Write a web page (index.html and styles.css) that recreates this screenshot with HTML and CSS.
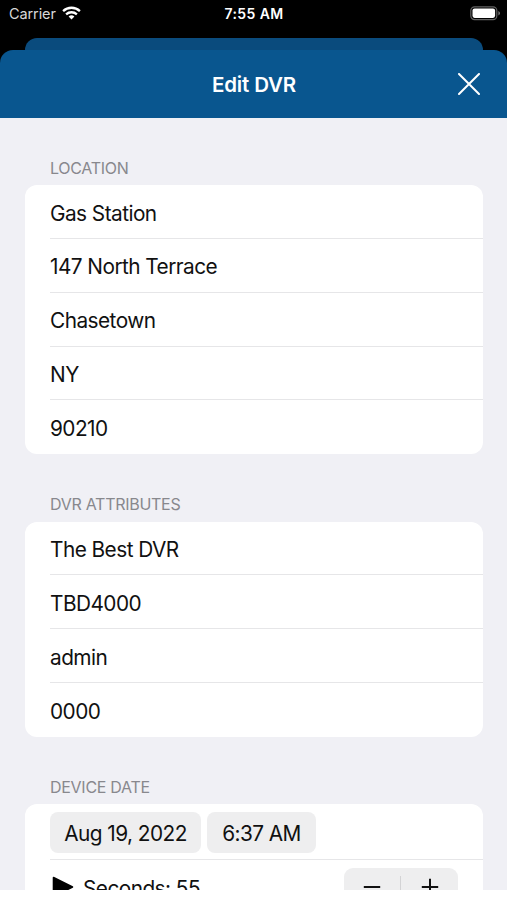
FILE: index.html
```html
<!DOCTYPE html>
<html lang="en">
<head>
<meta charset="utf-8">
<title>Edit DVR</title>
<link rel="stylesheet" href="styles.css">
</head>
<body>
<div class="phone">
  <header class="status">
    <div class="carrier"><span class="carrier-name">Carrier</span>
      <svg class="wifi" width="19" height="14" viewBox="0 0 19 14"><g fill="none" stroke="#fff" stroke-width="2.3"><path d="M1.1 5.1a12.2 12.2 0 0 1 16.8 0"/><path d="M4.1 8.4a7.9 7.9 0 0 1 10.8 0"/></g><path d="M9.5 13.5 6.6 10.6a4.2 4.2 0 0 1 5.8 0z" fill="#fff"/></svg>
    </div>
    <span class="clock">7:55 AM</span>
    <svg class="battery" width="31" height="15" viewBox="0 0 31 15"><rect x=".8" y=".8" width="26" height="12.8" rx="3.8" fill="none" stroke="#626262" stroke-width="1.2"/><rect x="2.5" y="2.5" width="22.6" height="9.4" rx="2.1" fill="#fff"/><path d="M28.4 5v4.4q1.6-.7 1.6-2.2T28.4 5z" fill="#777"/></svg>
  </header>
  <div class="back-sheet"></div>
  <main class="sheet">
    <div class="navbar">
      <h1>Edit DVR</h1>
      <svg class="close" width="22" height="22" viewBox="0 0 22 22"><path d="M1 1 21 21M21 1 1 21" stroke="#fff" stroke-width="2" stroke-linecap="round"/></svg>
    </div>
    <div class="form">
      <section>
        <h2>LOCATION</h2>
        <ul class="card">
          <li><span>Gas Station</span></li>
          <li><span>147 North Terrace</span></li>
          <li><span>Chasetown</span></li>
          <li><span>NY</span></li>
          <li><span>90210</span></li>
        </ul>
      </section>
      <section>
        <h2>DVR ATTRIBUTES</h2>
        <ul class="card">
          <li><span>The Best DVR</span></li>
          <li><span>TBD4000</span></li>
          <li><span>admin</span></li>
          <li><span>0000</span></li>
        </ul>
      </section>
      <section>
        <h2>DEVICE DATE</h2>
        <ul class="card">
          <li class="date-row"><span class="pill date">Aug 19, 2022</span><span class="pill time">6:37 AM</span></li>
          <li class="seconds-row">
            <svg class="play" width="22" height="22" viewBox="0 0 22 22"><path d="M1.5 1.5v19L20.5 11z" stroke="#000" stroke-width="1.6" stroke-linejoin="round"/></svg>
            <span class="seconds">Seconds: 55</span>
            <div class="stepper">
              <svg width="18" height="18" viewBox="0 0 18 18"><path d="M.8 9h16.4" stroke="#111" stroke-width="2"/></svg>
              <i></i>
              <svg width="18" height="18" viewBox="0 0 18 18"><path d="M.8 9h16.4M9 .8v16.4" stroke="#111" stroke-width="2"/></svg>
            </div>
          </li>
        </ul>
      </section>
    </div>
  </main>
</div>
</body>
</html>
```

FILE: styles.css
```css
* { box-sizing: border-box; }
body {
  margin: 0;
  background: #fff;
  font-family: Inter, "Liberation Sans", sans-serif;
  color: #111;
}
.phone {
  width: 507px;
  height: 890px;
  overflow: hidden;
  background: #000;
  display: flex;
  flex-direction: column;
}
.status {
  height: 38px;
  flex: none;
  display: grid;
  grid-template-columns: 1fr auto 1fr;
  align-items: start;
  padding: 0 6px 0 9px;
  color: #fff;
  font-size: 14.5px;
  line-height: 28px;
}
.carrier { display: flex; gap: 6px; color: #d8d8d8; }
.carrier-name { letter-spacing: -.1px; }
.wifi { margin-top: 6px; }
.clock { font-weight: 600; font-size: 14px; letter-spacing: .4px; margin-right: 2px; }
.battery { justify-self: end; margin-top: 6px; }
.back-sheet {
  height: 24px;
  flex: none;
  margin: 0 24px 0 25px;
  border-radius: 12px 12px 0 0;
  background: #0a4b7d;
}
.sheet {
  flex: none;
  margin-top: -12px;
}
.navbar {
  height: 68px;
  border-radius: 13px 13px 0 0;
  background: #09568f;
  color: #fff;
  display: grid;
  grid-template-columns: 1fr auto 1fr;
  align-items: center;
  padding: 0 27px 0 28px;
}
h1 {
  grid-column: 2;
  margin: 0;
  font-size: 20.5px;
  font-weight: 600;
  letter-spacing: -.15px;
}
.close { justify-self: end; }
.form { height: 782px; background: #f0f0f5; }
section { padding: 0 24.5px 0 25px; }
h2 {
  margin: 0;
  padding: 40px 0 0 25px;
  height: 67.3px;
  font-size: 16px;
  font-weight: 400;
  line-height: 20px;
  letter-spacing: -.28px;
  color: #88888d;
}
.card {
  list-style: none;
  margin: 0;
  padding: 0 0 0 25px;
  background: #fff;
  border-radius: 12px;
}
.card li {
  height: 53.8px;
  display: flex;
  align-items: center;
  padding-top: 3px;
  font-size: 20.8px;
  letter-spacing: -.54px;
  border-bottom: 1px solid #e6e6e8;
  white-space: nowrap;
}
.card li:last-child { border-bottom: 0; }
.card .date-row { height: 56px; gap: 6px; padding-top: 1px; }
.pill {
  height: 41px;
  border-radius: 8px;
  background: #eeeeef;
  display: flex;
  align-items: center;
  justify-content: center;
  padding-top: 2px;
}
.date { width: 151px; }
.time { width: 109px; }
.card .seconds-row { padding: 1px 25px 0 2px; }
.seconds { margin-left: 9px; padding-top: 2px; }
.stepper {
  margin-left: auto;
  width: 114px;
  height: 39px;
  border-radius: 9px;
  background: #eeeeef;
  display: flex;
  align-items: center;
  justify-content: space-between;
  padding: 0 19px;
}
.stepper i { width: 1px; height: 22px; background: #d3d3d5; }
```
